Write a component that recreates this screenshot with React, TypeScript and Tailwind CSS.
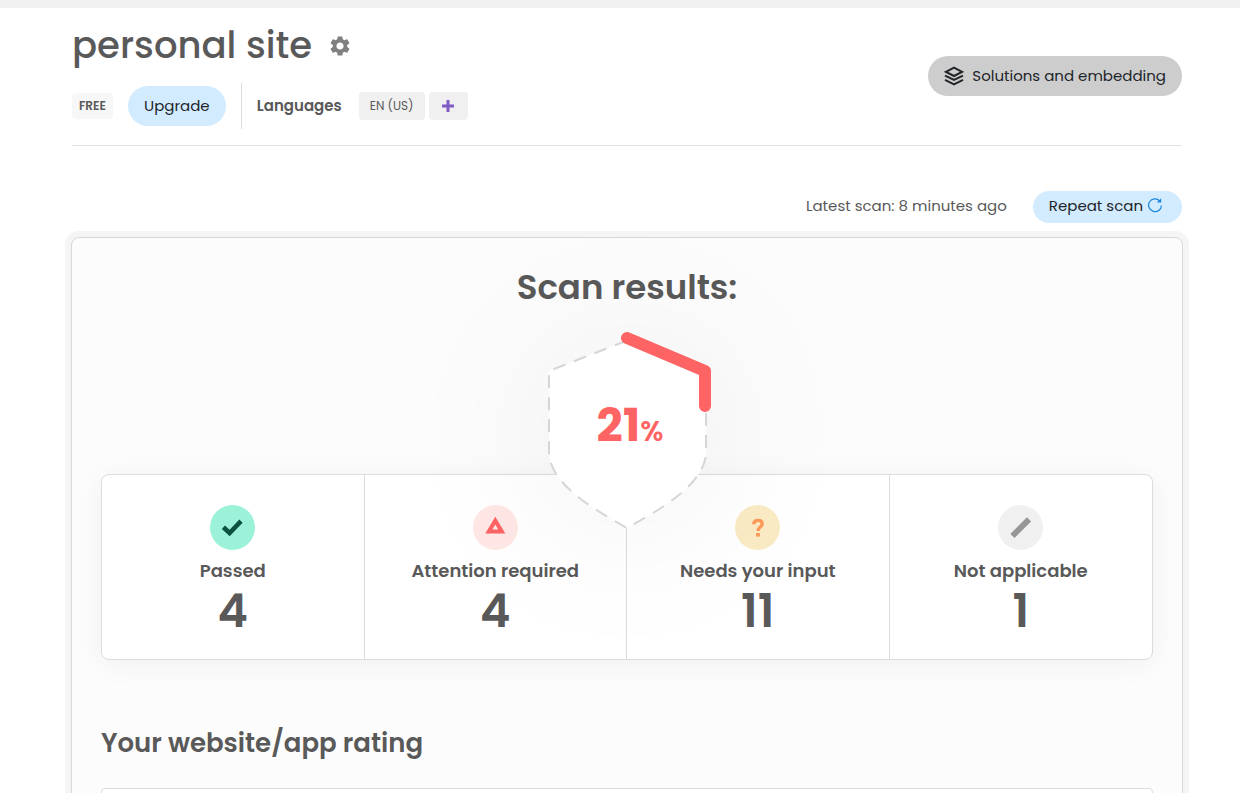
import React from "react";
import { MdSettings } from "react-icons/md";

const Layers = () => (
  <svg viewBox="0 0 20 20" className="size-5" fill="none" stroke="currentColor" strokeWidth="2" aria-hidden="true">
    <path d="M10 1.6 18 5.8 10 10 2 5.8Z" />
    <path d="M1 9.6 10 14 19 9.6" />
    <path d="M1 13.9 10 18.3 19 13.9" />
  </svg>
);

const Repeat = () => (
  <svg viewBox="0 0 16 16" className="size-4" fill="none" stroke="#1b86dc" strokeWidth="1.2" aria-hidden="true">
    <path d="M14.4 7.4A6.4 6.4 0 1 1 12.6 2.8" />
    <path d="M9.8 4.4H14.2V0.3Z" fill="#1b86dc" stroke="none" />
  </svg>
);

const Check = () => (
  <svg viewBox="0 0 24 24" className="size-6" fill="none" stroke="#0b513f" strokeWidth="4.6" aria-hidden="true">
    <path d="M2.4 11.2 8.6 17 20 5.2" />
  </svg>
);

const Warning = () => (
  <svg viewBox="0 0 24 24" className="size-6" fill="none" stroke="#ff6464" strokeWidth="4" aria-hidden="true">
    <path d="M12.3 4.6 18.8 15.4H5.8Z" />
  </svg>
);

const Question = () => (
  <svg viewBox="0 0 24 24" className="size-6" fill="none" stroke="#ff9a5a" strokeWidth="3.4" aria-hidden="true">
    <path d="M7.8 8.2C7.8 5.6 9.4 4.4 12 4.4S16.2 5.8 16.2 8C16.2 10.8 12 10.8 12 15" />
    <path d="M12 17V20.6" strokeWidth="3.8" />
  </svg>
);

const Slash = () => (
  <svg viewBox="0 0 24 24" className="size-6" fill="none" stroke="#969696" strokeWidth="5.8" aria-hidden="true">
    <path d="M3.4 20 20 3.4" />
  </svg>
);

const stats = [
  { label: "Passed", value: 4, tint: "bg-[#9bf2d9]", Icon: Check },
  { label: "Attention required", value: 4, tint: "bg-[#ffe7e5]", Icon: Warning },
  { label: "Needs your input", value: 11, tint: "bg-[#fbebc5]", Icon: Question },
  { label: "Not applicable", value: 1, tint: "bg-[#f0f0f0]", Icon: Slash },
];

export default function App() {
  return (
    <div className="h-screen overflow-hidden border-t-8 border-[#f0f0f0] bg-white pr-[58px] pl-[72px] font-[Poppins,Inter,sans-serif] text-[15px] text-[#595959]">
      <header className="flex items-start justify-between border-b border-[#e2e2e2] pb-4">
        <div>
          <div className="flex h-[75px] items-center gap-4">
            <h1 className="pb-0.5 text-[37px] leading-[72px] font-medium">personal site</h1>
            <button aria-label="Site settings" className="text-[#808080]">
              <MdSettings size={24} />
            </button>
          </div>
          <div className="flex h-[46px] items-center">
            <span className="rounded-sm bg-[#f7f7f7] px-[7px] text-[12px] leading-[26px] font-semibold">FREE</span>
            <button className="ml-[15px] h-10 w-[98px] rounded-full bg-[#d2ebff] text-[#212529]">Upgrade</button>
            <div className="ml-[15px] flex h-full items-center border-l border-[#dcdcdc] pl-[15px]">
              <span className="mr-[17px] font-semibold">Languages</span>
              <button className="h-7 w-[66px] rounded-sm bg-[#f0f0f0] text-[12px]">EN (US)</button>
              <button aria-label="Add language" className="ml-1 flex h-7 w-[39px] items-center justify-center rounded-sm bg-[#f0f0f0]">
                <svg viewBox="0 0 12 12" className="size-3" stroke="#7d5cc6" strokeWidth="3" aria-hidden="true">
                  <path d="M6 0V12M0 6H12" />
                </svg>
              </button>
            </div>
          </div>
        </div>
        <button className="mt-12 flex h-10 items-center gap-2 rounded-full bg-[#cdcdcd] px-4 text-[#212529]">
          <Layers />
          Solutions and embedding
        </button>
      </header>

      <main>
        <div className="mt-[45px] flex h-8 items-center justify-end gap-[26px]">
          <span className="pb-0.5">Latest scan: 8 minutes ago</span>
          <button className="flex h-8 items-center gap-1 rounded-full bg-[#d2ebff] pr-[19px] pb-0.5 pl-4 text-[#212529]">
            Repeat scan
            <Repeat />
          </button>
        </div>

        <section className="-mx-px mt-[14px] rounded-lg border border-[#d9d9d9] bg-[#fcfcfc] px-[29px] pt-[25px] pb-10 shadow-[0_0_0_6px_#f5f5f5]">
          <h2 className="text-center text-[34px] leading-[48px] font-semibold">Scan results:</h2>

          <div className="relative z-10 mx-auto mt-[14px] -mb-[61px] grid h-[210px] w-[180px] place-items-center">
            <svg
              viewBox="0 0 180 210"
              className="col-start-1 row-start-1 h-[210px] w-[180px] overflow-visible drop-shadow-[0_8px_76px_rgba(0,0,0,0.06)]"
              aria-hidden="true"
            >
              <path
                d="M90 15.5 12 46V130C16 162 60 186 90 203C120 186 165 162 169 130V46Z"
                fill="#fff"
                stroke="#d6d6d6"
                strokeWidth="2"
                strokeDasharray="13 9"
              />
              <path d="M90 13 168 46V81" fill="none" stroke="#ff6464" strokeWidth="12" strokeLinecap="round" strokeLinejoin="round" />
            </svg>
            <p className="z-10 col-start-1 row-start-1 pb-2.5 pl-1.5 text-[46px] leading-none font-bold text-[#ff6464]">
              21<span className="text-[28px] font-semibold">%</span>
            </p>
          </div>

          <div className="grid grid-cols-4 divide-x divide-[#dcdcdc] rounded-lg border border-[#dcdcdc] bg-white shadow-[0_4px_30px_rgba(0,0,0,0.05)]">
            {stats.map(({ label, value, tint, Icon }) => (
              <div key={label} className="flex h-[184px] flex-col items-center pt-[30px]">
                <span className={`flex size-[45px] items-center justify-center rounded-full ${tint}`}>
                  <Icon />
                </span>
                <h3 className="mt-[7px] text-[18px] leading-7 font-semibold">{label}</h3>
                <p className="text-[46px] leading-[52px] font-semibold">{value}</p>
              </div>
            ))}
          </div>

          <h2 className="mt-[62px] text-[26px] leading-[42px] font-semibold">Your website/app rating</h2>
          <div className="mt-6 h-40 rounded-sm border border-[#dcdcdc] bg-white" />
        </section>
      </main>
    </div>
  );
}
